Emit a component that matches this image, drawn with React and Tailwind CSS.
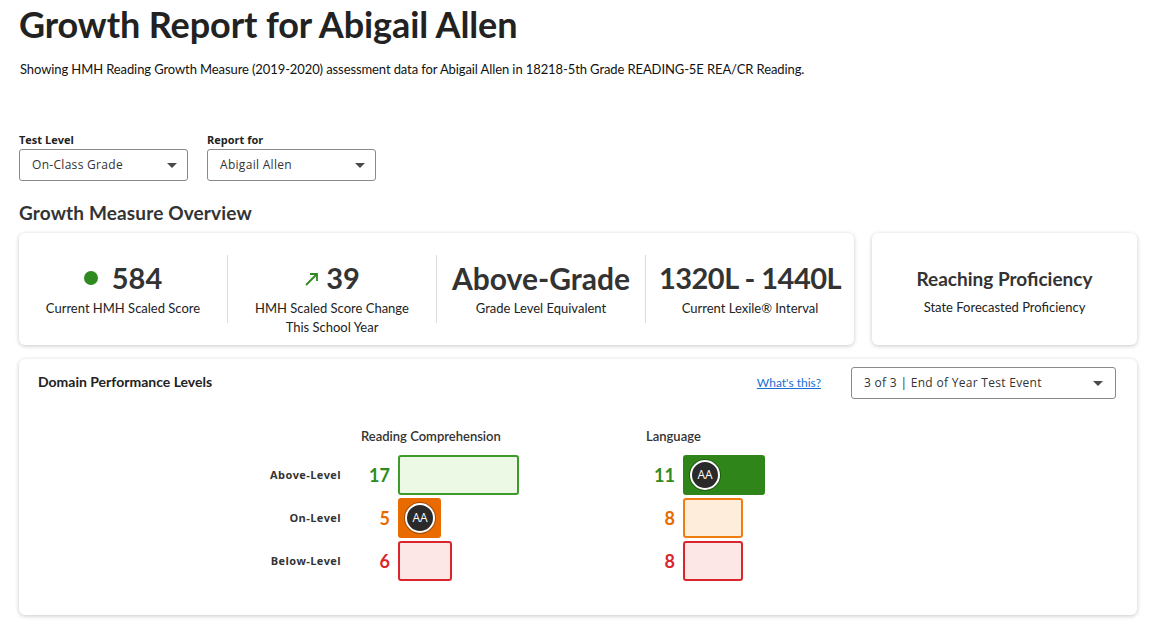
import React from "react";

const head = { fontFamily: "Lato, 'Noto Sans', sans-serif" };
const ui = { fontFamily: "'Open Sans', 'Noto Sans', sans-serif" };

function Caret() {
  return (
    <svg width="10" height="5" viewBox="0 0 10 5" className="shrink-0">
      <path d="M0 0 L10 0 L5 5 Z" fill="#4a4a4a" />
    </svg>
  );
}

function Select({ label, value, width }) {
  return (
    <div className="flex flex-col">
      <div className="text-[11px] font-bold text-[#222] mb-[1px]" style={ui}>{label}</div>
      <div
        className="h-[32px] border border-[#8a8a8a] rounded-[3px] flex items-center justify-between pl-[12px] pr-[10px] text-[12px] text-[#333] tracking-[0.3px]"
        style={{ ...ui, width }}
      >
        <span>{value}</span>
        <Caret />
      </div>
    </div>
  );
}

function Stat({ children, label, last }) {
  return (
    <div className={"flex-1 flex flex-col items-center justify-start " + (last ? "" : "border-r border-[#dcdcdc]")}>
      <div className="h-[42px] flex items-center mt-[2px]">{children}</div>
      <div className="text-[13px] text-[#222] text-center leading-[19px]" style={head}>{label}</div>
    </div>
  );
}

function Avatar() {
  return (
    <div className="w-[30px] h-[30px] rounded-full bg-[#2a2a2a] border-[2px] border-white flex items-center justify-center text-white text-[12px] shadow-[0_0_0_1px_rgba(0,0,0,0.3)]" style={ui}>
      AA
    </div>
  );
}

const styles = {
  aboveLight: "bg-[#ecf9e5] border-[2px] border-[#3f9a2c]",
  aboveFull: "bg-[#2f8519] border-[2px] border-[#2f8519]",
  onFull: "bg-[#e96b00] border-[2px] border-[#e96b00]",
  onLight: "bg-[#ffeddc] border-[2px] border-[#f07d10]",
  belowLight: "bg-[#fde6e6] border-[2px] border-[#d9262e]",
};

function Row({ n, color, width, cls, avatar }) {
  return (
    <div className="flex items-center h-[40px] mb-[3px]">
      <div className={"w-[29px] text-right text-[18px] font-bold " + color} style={head}>{n}</div>
      <div className="w-[8px]" />
      <div className={"h-[40px] rounded-[3px] flex items-center pl-[5px] " + cls} style={{ width }}>
        {avatar && <Avatar />}
      </div>
    </div>
  );
}

export default function App() {
  return (
    <div className="bg-white w-[1156px] h-[621px] overflow-hidden px-[19px] text-[#222]" style={head}>
      <h1 className="text-[36px] font-bold text-[#222] leading-[46px] pt-[1px] tracking-[-0.1px]">Growth Report for Abigail Allen</h1>
      <p className="text-[13px] text-[#111] mt-[13px] ml-[1px] tracking-[-0.1px]">
        Showing HMH Reading Growth Measure (2019-2020) assessment data for Abigail Allen in 18218-5th Grade READING-5E REA/CR Reading.
      </p>

      <div className="flex gap-[19px] mt-[52px]">
        <Select label="Test Level" value="On-Class Grade" width={169} />
        <Select label="Report for" value="Abigail Allen" width={169} />
      </div>

      <h2 className="text-[19px] font-bold text-[#333] mt-[20px] leading-[24px] tracking-[0.15px]">Growth Measure Overview</h2>

      <div className="flex gap-[18px] mt-[8px]">
        <div className="w-[835px] h-[112px] rounded-[6px] bg-white shadow-[0_1px_4px_rgba(0,0,0,0.22)] flex items-stretch py-[22px]">
          <Stat label="Current HMH Scaled Score">
            <span className="w-[14px] h-[14px] rounded-full bg-[#2f8a1f] mr-[14px]" />
            <span className="text-[29px] font-bold text-[#333]">584</span>
          </Stat>
          <Stat label={<>HMH Scaled Score Change<br />This School Year</>}>
            <svg width="16" height="16" viewBox="0 0 16 16" className="mr-[6px] mt-[2px]">
              <path d="M2 14 L13 3 M6 3 L13 3 L13 10" stroke="#2f8a1f" strokeWidth="1.8" fill="none" />
            </svg>
            <span className="text-[29px] font-bold text-[#333]">39</span>
          </Stat>
          <Stat label="Grade Level Equivalent">
            <span className="text-[30px] font-bold text-[#333]">Above-Grade</span>
          </Stat>
          <Stat label="Current Lexile® Interval" last>
            <span className="text-[29px] font-bold text-[#333] tracking-[-0.5px]">1320L - 1440L</span>
          </Stat>
        </div>
        <div className="flex-1 h-[112px] rounded-[6px] bg-white shadow-[0_1px_4px_rgba(0,0,0,0.22)] flex flex-col items-center justify-center pt-[6px]">
          <div className="text-[19px] font-bold text-[#333] leading-[24px]">Reaching Proficiency</div>
          <div className="text-[13px] text-[#222] mt-[7px]">State Forecasted Proficiency</div>
        </div>
      </div>

      <div className="mt-[14px] h-[256px] rounded-[6px] bg-white shadow-[0_1px_4px_rgba(0,0,0,0.22)] pl-[19px] pr-[21px] pt-[8px]">
        <div className="flex items-center justify-between">
          <div className="text-[14px] font-bold text-[#222] mb-[3px]">Domain Performance Levels</div>
          <div className="flex items-center">
            <a className="text-[12px] text-[#1a6fd6] underline mr-[30px]" href="#">What's this?</a>
            <div className="w-[265px] h-[32px] border border-[#8a8a8a] rounded-[3px] flex items-center justify-between pl-[12px] pr-[12px] text-[12px] text-[#333] tracking-[0.3px]" style={ui}>
              <span>3 of 3 | End of Year Test Event</span>
              <Caret />
            </div>
          </div>
        </div>

        <div className="flex mt-[28px]">
          <div className="w-[303px] flex flex-col items-end pt-[28px]">
            {["Above-Level", "On-Level", "Below-Level"].map((l) => (
              <div key={l} className="h-[40px] mb-[3px] flex items-center text-[11px] font-bold text-[#333] tracking-[0.4px]" style={ui}>{l}</div>
            ))}
          </div>
          <div className="w-[20px]" />
          <div className="w-[285px]">
            <div className="text-[13px] font-semibold text-[#333] h-[28px] pt-[2px] leading-[14px]">Reading Comprehension</div>
            <Row n="17" color="text-[#2f8a1f]" width={121} cls={styles.aboveLight} />
            <Row n="5" color="text-[#e96b00]" width={43} cls={styles.onFull} avatar />
            <Row n="6" color="text-[#d9262e]" width={54} cls={styles.belowLight} />
          </div>
          <div className="w-[285px]">
            <div className="text-[13px] font-semibold text-[#333] h-[28px] pt-[2px] leading-[14px]">Language</div>
            <Row n="11" color="text-[#2f8a1f]" width={82} cls={styles.aboveFull} avatar />
            <Row n="8" color="text-[#e96b00]" width={60} cls={styles.onLight} />
            <Row n="8" color="text-[#d9262e]" width={60} cls={styles.belowLight} />
          </div>
        </div>
      </div>
    </div>
  );
}
